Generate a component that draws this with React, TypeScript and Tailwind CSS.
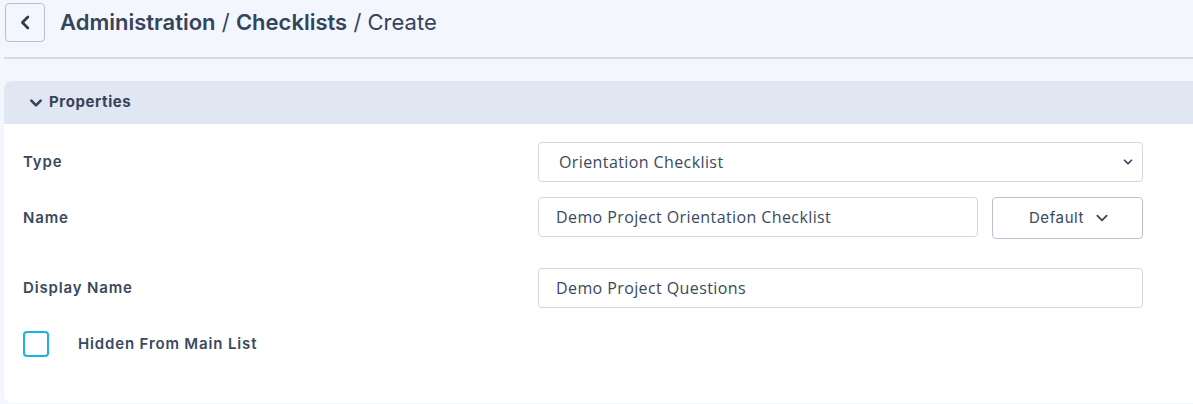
import React from "react";

const Chevron = ({ dir = "down", size = 12, stroke = 2.5, className = "" }: { dir?: "down" | "left"; size?: number; stroke?: number; className?: string }) => (
  <svg width={size} height={size} viewBox="0 0 24 24" fill="none" stroke="currentColor" strokeWidth={stroke} strokeLinecap="round" strokeLinejoin="round" className={className}>
    {dir === "down" ? <path d="M5 8.5l7 7 7-7" /> : <path d="M15 5l-7 7 7 7" />}
  </svg>
);

export default function App() {
  const labelFont = { fontFamily: "Inter, 'Noto Sans', sans-serif" };
  const inputFont = { fontFamily: "'Open Sans', sans-serif" };
  return (
    <div className="min-h-screen bg-[#f3f6fd] pt-[3px] text-[#3a4960]" style={labelFont}>
      <div className="flex items-center pl-[5px] gap-[15px]">
        <button className="w-[40px] h-[39px] flex items-center justify-center border border-[#b7c1d1] rounded-[4px] bg-[#f3f6fd] text-[#2f3b52]">
          <Chevron dir="left" size={19} stroke={3.4} />
        </button>
        <h1 className="text-[22px] tracking-[0px] leading-none text-[#35445a] -mt-[2px]">
          <span className="font-semibold">Administration</span>
          <span className="font-normal"> / </span>
          <span className="font-semibold">Checklists</span>
          <span className="font-normal"> / Create</span>
        </h1>
      </div>
      <div className="mt-[15px] ml-[4px] border-t-2 border-[#d6dbe4]" />
      <div className="mt-[22px] ml-[4px] bg-white rounded-l-[8px] overflow-hidden">
        <div className="h-[43px] bg-[#e1e7f2] flex items-center pl-[24px] gap-[5px] text-[#35445a]">
          <Chevron dir="down" size={16} stroke={4} />
          <span className="text-[15px] font-bold tracking-[0.6px]">Properties</span>
        </div>
        <div className="pt-[18px] pb-[46px] pl-[19px]">
          <div className="grid grid-cols-[515px_605px] items-center">
            <div className="text-[15px] font-semibold tracking-[0.85px]">Type</div>
            <div className="relative h-[40px] border border-[#d3d8e0] rounded-[4px] flex items-center pl-[20px] text-[16px] tracking-[0.4px]" style={inputFont}>
              Orientation Checklist
              <span className="absolute right-[8px] top-[13px] text-[#3a4960]"><Chevron dir="down" size={12} stroke={3.5} /></span>
            </div>
          </div>
          <div className="grid grid-cols-[515px_605px] items-center mt-[15px]">
            <div className="text-[15px] font-semibold tracking-[0.85px]">Name</div>
            <div className="flex items-start gap-[14px]">
              <div className="w-[440px] h-[40px] border border-[#d3d8e0] rounded-[4px] flex items-center pl-[17px] text-[16px] tracking-[0.4px]" style={inputFont}>
                Demo Project Orientation Checklist
              </div>
              <button className="w-[151px] h-[42px] border border-[#b7c1d1] rounded-[4px] flex items-center justify-center gap-[10px] text-[15px] tracking-[0.6px] text-[#3a4960] pl-[4px]">
                <span>Default</span>
                <Chevron dir="down" size={16} stroke={2.8} />
              </button>
            </div>
          </div>
          <div className="grid grid-cols-[515px_605px] items-center mt-[29px]">
            <div className="text-[15px] font-semibold tracking-[0.85px]">Display Name</div>
            <div className="h-[40px] border border-[#d3d8e0] rounded-[4px] flex items-center pl-[17px] text-[16px] tracking-[0.4px]" style={inputFont}>
              Demo Project Questions
            </div>
          </div>
          <div className="flex items-center mt-[23px] gap-[29px]">
            <div className="w-[26px] h-[26px] border-2 border-[#1cb1e4] rounded-[4px]" />
            <span className="text-[15px] font-semibold tracking-[0.85px]">Hidden From Main List</span>
          </div>
        </div>
      </div>
    </div>
  );
}
